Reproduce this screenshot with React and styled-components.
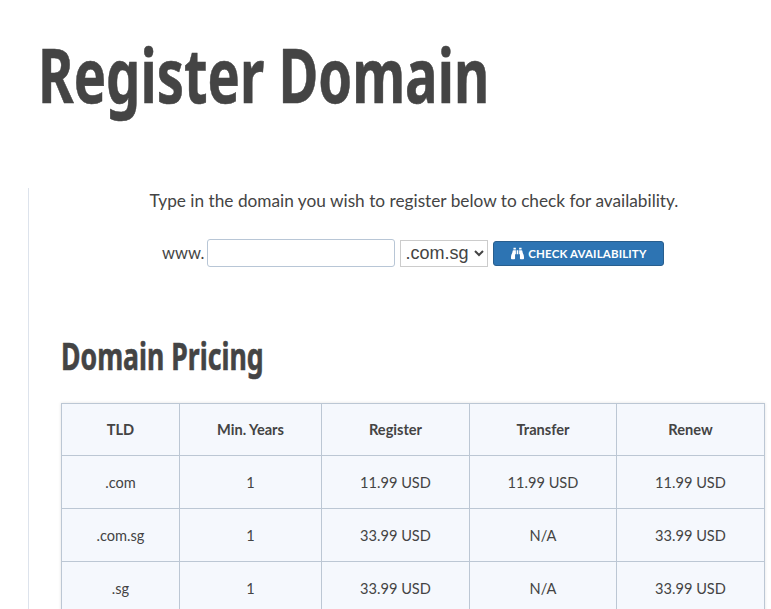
import React from "react"
import styled, { createGlobalStyle } from "styled-components"
import { FaBinoculars } from "react-icons/fa"

const rows = [
  { tld: ".com", years: 1, register: "11.99 USD", transfer: "11.99 USD", renew: "11.99 USD" },
  { tld: ".com.sg", years: 1, register: "33.99 USD", transfer: "N/A", renew: "33.99 USD" },
  { tld: ".sg", years: 1, register: "33.99 USD", transfer: "N/A", renew: "33.99 USD" },
]

export default function App() {
  return (
    <Page>
      <GlobalStyle />
      <Title><Narrow $scale={0.715}>Register Domain</Narrow></Title>
      <Content>
        <Intro>Type in the domain you wish to register below to check for availability.</Intro>
        <SearchForm>
          <Prefix>www.</Prefix>
          <DomainInput type="text" />
          <TldSelect defaultValue=".com.sg">
            <option>.com</option>
            <option>.com.sg</option>
            <option>.sg</option>
          </TldSelect>
          <CheckButton type="button">
            <FaBinoculars size={13} />
            Check Availability
          </CheckButton>
        </SearchForm>
        <Subtitle><Narrow $scale={0.72}>Domain Pricing</Narrow></Subtitle>
        <PriceTable>
          <colgroup>
            <col width="118" />
            <col width="142" />
            <col width="148" />
            <col width="147" />
            <col width="148" />
          </colgroup>
          <thead>
            <tr>
              <Th>TLD</Th>
              <Th>Min. Years</Th>
              <Th>Register</Th>
              <Th>Transfer</Th>
              <Th>Renew</Th>
            </tr>
          </thead>
          <tbody>
            {rows.map(row => (
              <tr key={row.tld}>
                <Td>{row.tld}</Td>
                <Td>{row.years}</Td>
                <Td>{row.register}</Td>
                <Td>{row.transfer}</Td>
                <Td>{row.renew}</Td>
              </tr>
            ))}
          </tbody>
        </PriceTable>
      </Content>
    </Page>
  )
}

const GlobalStyle = createGlobalStyle`
  html, body {
    margin: 0;
    height: 100%;
    overflow: hidden;
    background: #fff;
  }
`

const Page = styled.div`
  width: 771px;
  height: 609px;
  overflow: hidden;
  color: #444;
  font-family: Lato, sans-serif;
`

const Title = styled.h1`
  margin: 0;
  padding: 32px 0 0 38px;
  height: 153px;
  box-sizing: border-box;
  font-family: "Noto Sans", sans-serif;
  font-size: 76px;
  line-height: 84px;
  font-weight: 700;
  color: #444;
  white-space: nowrap;
`

// no condensed family is installed, so the headings are squeezed
const Narrow = styled.span`
  display: inline-block;
  transform: scaleX(${props => props.$scale});
  transform-origin: left center;
  -webkit-text-stroke: 0.6px currentColor;
`

const Content = styled.div`
  margin: 35px 0 0 28px;
  padding-left: 32px;
  border-left: 1px solid #dde3ec;
  width: 706px;
  height: 421px;
`

const Intro = styled.p`
  margin: 0;
  padding-top: 1px;
  font-size: 17.25px;
  line-height: 24px;
  text-align: center;
  white-space: nowrap;
`

const SearchForm = styled.form`
  display: flex;
  align-items: center;
  margin: 25px 0 0 101px;
  height: 30px;
`

const Prefix = styled.span`
  font-size: 16.5px;
  margin-right: 3px;
`

const DomainInput = styled.input`
  width: 188px;
  height: 28px;
  box-sizing: border-box;
  border: 1px solid #b8c6d6;
  border-radius: 3px;
  background: #fff;
  padding: 0 6px;
`

const TldSelect = styled.select`
  margin-left: 5px;
  width: 88px;
  height: 27px;
  box-sizing: border-box;
  border: 1px solid #ccc;
  background: #fff;
  color: #444;
  font-family: "Liberation Sans", sans-serif;
  font-size: 18px;
`

const CheckButton = styled.button`
  display: flex;
  align-items: center;
  justify-content: center;
  gap: 4px;
  margin-left: 5px;
  width: 171px;
  height: 25px;
  padding: 0;
  border: 1px solid #285e8e;
  border-radius: 3px;
  background: #2d74b3;
  color: #fff;
  font-family: Lato, sans-serif;
  font-size: 11.5px;
  font-weight: 700;
  letter-spacing: 0.15px;
  text-transform: uppercase;
  white-space: nowrap;
`

const Subtitle = styled.h2`
  margin: 66px 0 0;
  height: 69px;
  font-family: "Noto Sans", sans-serif;
  font-size: 37px;
  line-height: 44px;
  font-weight: 700;
  color: #444;
  white-space: nowrap;
`

const PriceTable = styled.table`
  width: 703px;
  table-layout: fixed;
  border-collapse: collapse;
  background: #f5f8fd;
  box-shadow: 0 0 3px rgba(0, 0, 0, 0.12);
`

const Th = styled.th`
  height: 51px;
  padding: 0;
  border: 1px solid #bcc7d4;
  font-size: 14.6px;
  font-weight: 700;
  text-align: center;
`

const Td = styled.td`
  height: 52px;
  padding: 0;
  border: 1px solid #bcc7d4;
  font-size: 14.6px;
  text-align: center;
`
